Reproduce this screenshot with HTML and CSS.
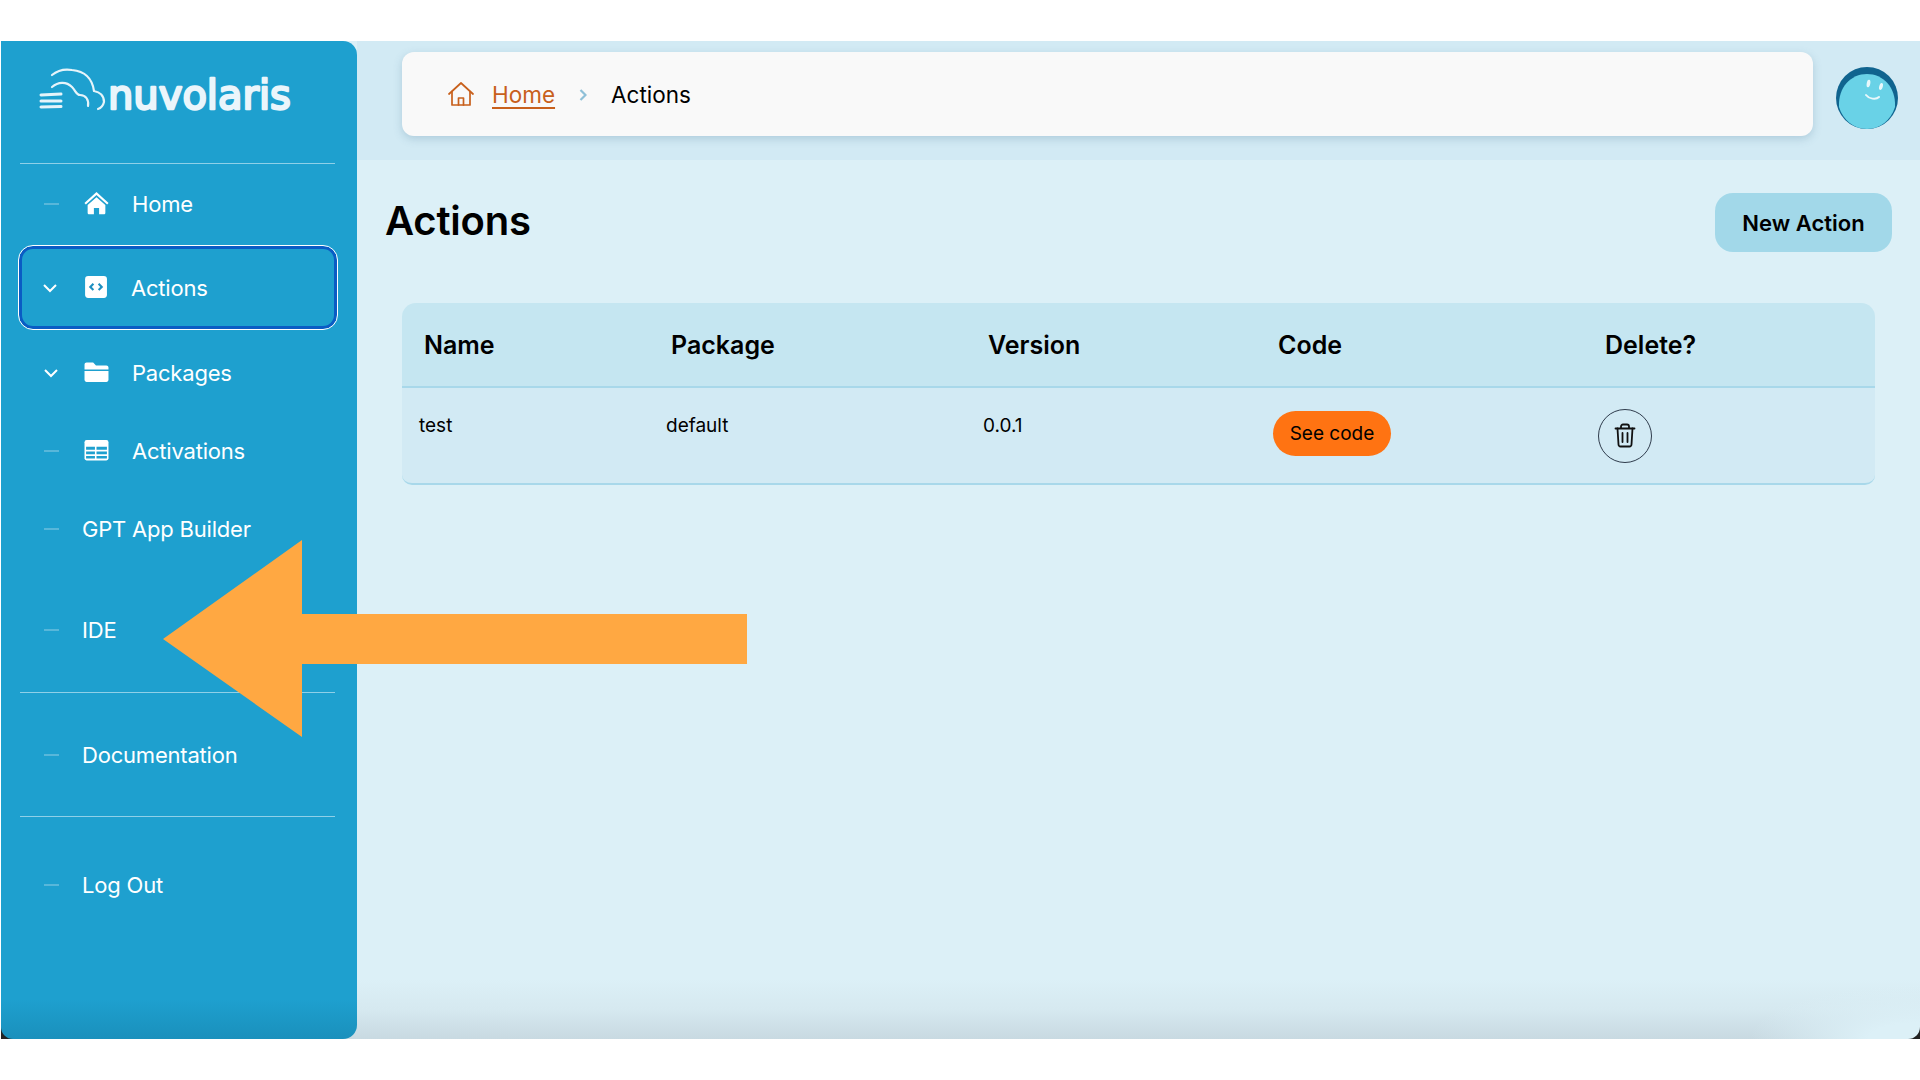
FILE: index.html
```html
<!DOCTYPE html>
<html lang="en">
  <head>
    <meta charset="UTF-8" />
    <title>Actions</title>
    <link rel="stylesheet" href="styles.css">
  </head>
  <body>
    <div class="app">
      <aside class="sidebar">
        <div class="logo">
          <svg width="290" height="90" viewBox="0 0 290 90">
            <g fill="none" stroke="#e6f4fa" stroke-linecap="round" stroke-linejoin="round" stroke-width="2.2">
              <path d="M21 45l20-1M21 51h20M21 57l20-.5" stroke-width="3"/>
              <path d="M32 25c6-5 14-6 20-5 11 1 20 7 22 21 6 1 10 5 10 11-1 4-3 6-6 7"/>
              <path d="M32 37c6-5 14-6 20 0 4 4 4 8 8 8 6 0 9 5 8 11"/>
            </g>
            <text class="logo-text" x="88" y="59">nuvolaris</text>
          </svg>
        </div>

        <hr class="side-line" />
        <nav class="nav">
          <a class="nav-row">
            <span class="dash"></span>
            <svg class="nav-icon" viewBox="0 0 24 24" fill="#fff"><path d="M12 1 .4 11.400l1.400 1.500L12 3.800l10.200 9.100 1.400-1.500z"/><path d="M12 6 3.500 13.400V21c0 .8.6 1.400 1.400 1.400h4.600v-6.200h5v6.200h4.600c.8 0 1.400-.6 1.400-1.400v-7.600z"/></svg>
            <span>Home</span>
          </a>
          <a class="nav-row active">
            <svg class="chevron" viewBox="0 0 16 16"><path d="M2 5l6 6 6-6"/></svg>
            <svg class="nav-icon" viewBox="0 0 24 24"><rect x="2" y="1" width="21" height="21" rx="3" fill="#fff"/><path d="M10 8.500l-3 3 3 3M15 8.500l3 3-3 3" fill="none" stroke="#1e8fc0" stroke-width="2"/></svg>
            <span>Actions</span>
          </a>
          <a class="nav-row packages">
            <svg class="chevron" viewBox="0 0 16 16"><path d="M2 5l6 6 6-6"/></svg>
            <svg class="nav-icon" viewBox="0 0 24 24" fill="#fff"><path d="M.5 9V4.500C.5 3.400 1.400 2.500 2.500 2.500h6.300l2.700 2.700h10c1.100 0 2 .9 2 2V9z"/><path d="M.5 10.500h23v8.500c0 1.100-.9 2-2 2h-19c-1.100 0-2-.9-2-2z"/></svg>
            <span>Packages</span>
          </a>
          <a class="nav-row">
            <span class="dash"></span>
            <svg class="nav-icon" viewBox="0 0 24 24"><rect x=".5" y="2" width="23" height="19.500" rx="2" fill="#fff"/><path d="M2 8.500h8.500v2.800H2zM12 8.500h10v2.800H12zM2 13h8.500v2.600H2zM12 13h10v2.600H12zM2 17.200h8.500v2.500H2zM12 17.200h10v2.500H12z" fill="#1ea0cf"/></svg>
            <span>Activations</span>
          </a>
          <a class="nav-row plain">
            <span class="dash"></span>
            <span>GPT App Builder</span>
          </a>
          <a class="nav-row plain ide">
            <span class="dash"></span>
            <span>IDE</span>
          </a>
        </nav>
        <hr class="side-line line-two" />
        <a class="nav-row plain">
          <span class="dash"></span>
          <span>Documentation</span>
        </a>
        <hr class="side-line line-three" />
        <a class="nav-row plain">
          <span class="dash"></span>
          <span>Log Out</span>
        </a>
      </aside>

      <main class="main">
        <header class="topbar">
          <div class="crumbs">
            <svg class="crumb-home" viewBox="0 0 26 24" fill="none" stroke="#c8601c" stroke-width="1.700" stroke-linejoin="round" stroke-linecap="round"><path d="M1 12 13 1l12 11"/><path d="M4 9.500V23h18V9.500"/><path d="M10.500 23v-7h5v7"/></svg>
            <a class="crumb-link">Home</a>
            <svg class="crumb-sep" viewBox="0 0 8 12" fill="none" stroke="#8fc0d8" stroke-width="2.200"><path d="M1.500 1l5 5-5 5"/></svg>
            <span>Actions</span>
          </div>
          <svg class="avatar" viewBox="0 0 62 62">
            <circle cx="31" cy="31" r="31" fill="#10648f"/>
            <path d="M3 40C2 20 15 7 31 7s29 13 28 33c-4 13-15 22-28 22S7 53 3 40z" fill="#69d2e7"/>
            <ellipse cx="32.500" cy="16.500" rx="1.800" ry="3.800" fill="#e9f8fb" transform="rotate(10 32.500 16.500)"/>
            <ellipse cx="45" cy="19.500" rx="1.800" ry="3.500" fill="#e9f8fb" transform="rotate(15 45 19.500)"/>
            <path d="M30 28c3 4 10 5 13 2" fill="none" stroke="#e9f8fb" stroke-width="2" stroke-linecap="round"/>
          </svg>
        </header>

        <div class="page-head">
          <h1>Actions</h1>
          <button class="new-btn">New Action</button>
        </div>

        <table class="actions-table">
          <thead>
            <tr>
              <th class="col-name">Name</th>
              <th class="col-package">Package</th>
              <th class="col-version">Version</th>
              <th class="col-code">Code</th>
              <th>Delete?</th>
            </tr>
          </thead>
          <tbody>
            <tr>
              <td class="text-cell">test</td>
              <td class="text-cell">default</td>
              <td class="text-cell">0.0.1</td>
              <td><button class="code-btn">See code</button></td>
              <td>
                <button class="trash-btn">
                  <svg width="22" height="25" viewBox="0 0 22 25" fill="none" stroke="#111" stroke-width="1.800" stroke-linecap="round" stroke-linejoin="round"><path d="M1.500 5.500h19M7 5.500V3.500C7 2.400 7.900 1.500 9 1.500h4c1.100 0 2 .9 2 2v2"/><path d="M3.500 5.500l1 16c.1 1.100 1 2 2 2h9c1 0 1.900-.9 2-2l1-16"/><path d="M8.500 10v9M13.500 10v9"/></svg>
                </button>
              </td>
            </tr>
          </tbody>
        </table>
      </main>

      <svg class="arrow" width="590" height="200" viewBox="0 0 590 200">
        <path d="M0 99 139 0v74h445v50H139v73z" fill="#ffa842"/>
      </svg>
    </div>
  </body>
</html>
```

FILE: styles.css
```css
* {
  box-sizing: border-box;
}
body {
  margin: 0;
  background-color: white;
  color: black;
  font-family: Inter, "Liberation Sans", sans-serif;
  height: 1080px;
  overflow: hidden;
}
.app {
  position: relative;
  display: flex;
  margin: 41px 0 0 1px;
  height: 998px;
  background: linear-gradient(transparent 50%, #222 50%);
}

/* sidebar */
.sidebar {
  position: relative;
  z-index: 1;
  width: 356px;
  flex-shrink: 0;
  background: linear-gradient(#1ea0cf 96%, #1a90bc 100%);
  border-radius: 0 14px 14px 12px;
  color: #fff;
  font-size: 22px;
  letter-spacing: -0.2px;
}
.logo {
  height: 122px;
  padding-left: 19px;
  padding-top: 9px;
}
.logo svg {
  display: block;
}
.logo-text {
  font-family: "DejaVu Sans", sans-serif;
  font-size: 40px;
  letter-spacing: 0;
  fill: #eaf5fb;
  stroke: #eaf5fb;
  stroke-width: 2.4;
  stroke-linejoin: round;
}
.side-line {
  margin: 0 22px 0 19px;
  border: none;
  height: 1px;
  background-color: #8fd0e8;
}
.line-two {
  margin-top: 24px;
  margin-bottom: 23px;
}
.line-three {
  margin-top: 22px;
  margin-bottom: 29px;
}
.nav {
  display: flex;
  flex-direction: column;
}
.nav-row {
  display: flex;
  align-items: center;
  height: 78px;
  padding-left: 43px;
  color: #fff;
}
.nav .nav-row {
  padding-top: 1px;
}
.dash {
  width: 15px;
  height: 2px;
  background-color: #58b7da;
  flex-shrink: 0;
  margin-right: 25px;
}
.plain .dash {
  margin-right: 23px;
}
.chevron {
  width: 16px;
  height: 16px;
  margin-right: 25px;
  fill: none;
  stroke: #fff;
  stroke-width: 2;
  margin-left: -1px;
  flex-shrink: 0;
}
.nav-icon {
  width: 25px;
  height: 25px;
  margin-right: 23px;
  flex-shrink: 0;
}
.nav .active {
  height: 83px;
  margin: 4px 20px 0 18px;
  padding-left: 21px;
  padding-top: 0;
  border: 3px solid #0a5cc4;
  border-radius: 14px;
  outline: 1px solid #fff;
}
.packages {
  margin-top: 4px;
}
.ide {
  margin-top: 23px;
}

/* main */
.main {
  flex: 1;
  margin-left: -16px;
  padding-left: 16px;
  border-radius: 0 0 12px 0;
  background:
    radial-gradient(ellipse 170px 55px at 100% 100%, #dcf0f7 30%, transparent),
    linear-gradient(#dcf0f7 94%, #d6e9f0 97%, #c8d9e1 100%);
}
.topbar {
  display: flex;
  align-items: flex-start;
  gap: 23px;
  height: 119px;
  padding: 11px 22px 0 45px;
  background-color: #d2eaf4;
}
.crumbs {
  flex: 1;
  display: flex;
  align-items: center;
  height: 84px;
  padding-left: 46px;
  background-color: #f9f9f9;
  border-radius: 12px;
  box-shadow: 0 3px 8px rgba(70, 120, 150, 0.25);
  font-size: 22.5px;
}
.crumb-home {
  width: 26px;
  height: 24px;
  margin-right: 18px;
}
.crumb-link {
  color: #c8601c;
  text-decoration: underline;
  text-underline-offset: 4px;
}
.crumb-sep {
  width: 8px;
  height: 12px;
  margin: 2px 24px 0 24px;
}
.avatar {
  width: 62px;
  height: 62px;
  margin-top: 15px;
}
.page-head {
  display: flex;
  justify-content: space-between;
  align-items: center;
  padding: 33px 28px 0 28px;
}
h1 {
  margin: 0 0 5px;
  font-size: 40px;
  font-weight: 600;
  letter-spacing: -0.2px;
}
.new-btn {
  width: 177px;
  height: 59px;
  border: none;
  border-radius: 18px;
  background-color: #a2d8e9;
  color: black;
  font-family: inherit;
  font-size: 22px;
  font-weight: 600;
}
.actions-table {
  width: 1473px;
  margin: 51px 0 0 45px;
  border-collapse: separate;
  border-spacing: 0;
  table-layout: fixed;
}
.actions-table th {
  height: 85px;
  padding: 0 0 0 22px;
  text-align: left;
  font-size: 25px;
  font-weight: 600;
  background-color: #c5e6f1;
  border-bottom: 2px solid #a8d8ea;
}
.actions-table th:first-child {
  border-top-left-radius: 14px;
}
.actions-table th:last-child {
  border-top-right-radius: 14px;
}
.actions-table td {
  height: 97px;
  padding: 0 0 0 17px;
  font-size: 19px;
  background-color: #d2eaf4;
  border-bottom: 2px solid #a8d8ea;
}
.actions-table .text-cell {
  padding-bottom: 20px;
}
.actions-table td:first-child {
  border-bottom-left-radius: 10px;
}
.actions-table td:last-child {
  border-bottom-right-radius: 10px;
}
.col-name {
  width: 247px;
}
.col-package {
  width: 317px;
}
.col-version {
  width: 290px;
}
.col-code {
  width: 327px;
}
.code-btn {
  display: block;
  width: 118px;
  height: 45px;
  margin-top: -5px;
  border: none;
  border-radius: 23px;
  background-color: #ff7312;
  color: black;
  font-family: inherit;
  font-size: 19px;
}
.trash-btn {
  display: flex;
  align-items: center;
  justify-content: center;
  width: 54px;
  height: 54px;
  padding: 0;
  margin: 0 0 0 -2px;
  border: 1.500px solid #2f3c4c;
  border-radius: 50%;
  background: none;
}

/* annotation arrow sits on top of everything */
.arrow {
  position: absolute;
  left: 162px;
  top: 499px;
  z-index: 2;
}
```
